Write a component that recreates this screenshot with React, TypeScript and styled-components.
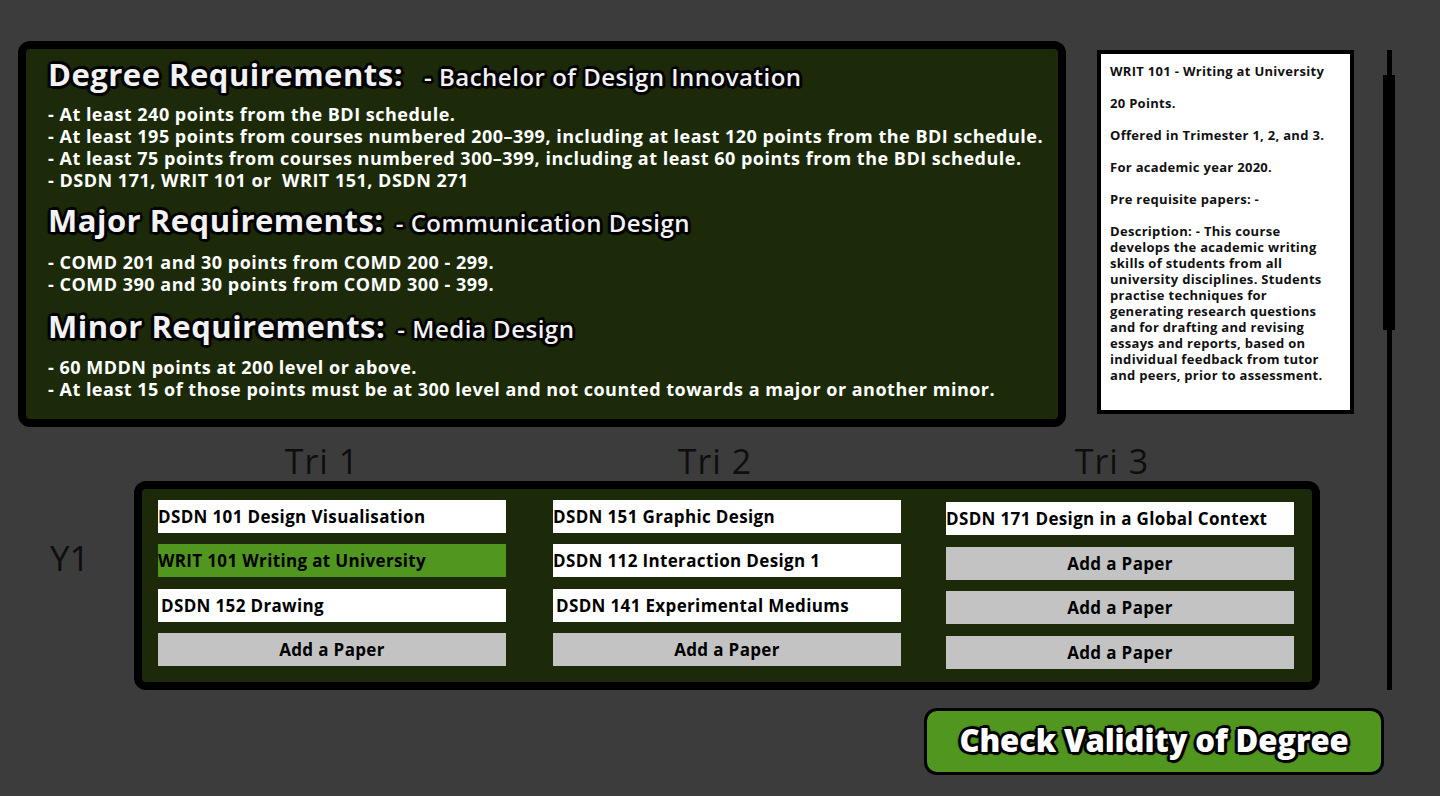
import React from "react";
import styled, { createGlobalStyle } from "styled-components";

const GlobalStyle = createGlobalStyle`
  html, body { margin: 0; padding: 0; background: #3c3c3c; }
  body { font-family: "Open Sans", "Liberation Sans", sans-serif; }
  * { box-sizing: border-box; }
`;

const Page = styled.div`
  width: 1440px;
  height: 796px;
  background: #3c3c3c;
  padding: 41px 0 0 18px;
  display: flex;
  flex-direction: column;
  overflow: hidden;
`;

const Upper = styled.div`
  display: flex;
  align-items: flex-start;
`;

const MainColumn = styled.div`
  width: 1336px;
  display: flex;
  flex-direction: column;
`;

const TopRow = styled.div`
  display: flex;
  align-items: flex-start;
`;

const ReqPanel = styled.section`
  width: 1048px;
  height: 386px;
  background: #1c2a09;
  border: 8px solid #000;
  border-radius: 12px;
  padding: 5px 0 0 22px;
  display: flex;
  flex-direction: column;
`;

const Section = styled.div<{ $gap: number }>`
  margin-top: ${(p) => p.$gap}px;
`;

const outline = `
  text-shadow:
    0 0 2px #000,
    2px 2px 0 #000, -2px -2px 0 #000, 2px -2px 0 #000, -2px 2px 0 #000,
    0 2px 0 #000, 0 -2px 0 #000, 2px 0 0 #000, -2px 0 0 #000,
    3px 1px 1px #000, -3px 1px 1px #000, 1px 3px 1px #000, 1px -3px 1px #000;
`;

const Heading = styled.h2`
  margin: 0;
  height: 40px;
  line-height: 40px;
  white-space: nowrap;
  color: #f2f2f2;
  font-size: 31px;
  font-weight: 700;
  letter-spacing: 0.5px;
  ${outline}
`;

const SubTitle = styled.span<{ $gap: number }>`
  margin-left: ${(p) => p.$gap}px;
  font-size: 24px;
  font-weight: 600;
  letter-spacing: 0.5px;
`;

const Rules = styled.ul<{ $gap: number }>`
  list-style: none;
  margin: ${(p) => p.$gap}px 0 0;
  padding: 0;
`;

const Rule = styled.li`
  color: #fff;
  font-size: 18px;
  font-weight: 700;
  line-height: 22px;
  height: 22px;
  white-space: nowrap;
  letter-spacing: 0.5px;
`;

const InfoCard = styled.aside`
  margin: 9px 0 0 31px;
  width: 257px;
  height: 364px;
  background: #fff;
  border: 4px solid #000;
  padding: 9px 0 0 9px;
`;

const InfoPara = styled.p`
  margin: 0 0 16px;
  color: #111;
  font-size: 13px;
  font-weight: 700;
  line-height: 16px;
  white-space: nowrap;
  letter-spacing: 0.3px;
`;

const Scrollbar = styled.div`
  position: relative;
  margin: 9px 0 0 29px;
  width: 12px;
  height: 640px;
  display: flex;
  justify-content: center;
  &::before {
    content: "";
    width: 5px;
    height: 100%;
    background: #000;
  }
`;

const Thumb = styled.div`
  position: absolute;
  left: 0;
  top: 25px;
  width: 12px;
  height: 255px;
  background: #000;
`;

const TriHeader = styled.div`
  margin-top: 14px;
  height: 40px;
  padding-left: 140px;
  padding-right: 18px;
  display: flex;
  justify-content: space-between;
  width: 1294px;
`;

const TriLabel = styled.div<{ $shift: number }>`
  width: 348px;
  text-align: center;
  padding-right: ${(p) => p.$shift}px;
  font-size: 34px;
  line-height: 40px;
  font-weight: 500;
  color: #0e0e0e;
  letter-spacing: 1px;
`;

const YearRow = styled.div`
  display: flex;
  align-items: flex-start;
`;

const YearLabel = styled.div`
  width: 116px;
  padding-left: 32px;
  margin-top: 57px;
  font-size: 35px;
  line-height: 40px;
  font-weight: 500;
  color: #0e0e0e;
`;

const YearPanel = styled.div`
  width: 1186px;
  height: 209px;
  background: #1c2a09;
  border: 8px solid #000;
  border-radius: 12px;
  padding: 10.5px 18px 0 16px;
  display: flex;
  justify-content: space-between;
`;

const TriColumn = styled.div<{ $offset: number; $nudge: number }>`
  width: 348px;
  padding-top: ${(p) => p.$offset}px;
  margin-left: ${(p) => p.$nudge}px;
  display: flex;
  flex-direction: column;
  gap: 11.5px;
`;

const Paper = styled.div<{ $kind: "course" | "selected" | "add"; $indent: number }>`
  height: 33px;
  display: flex;
  align-items: center;
  justify-content: ${(p) => (p.$kind === "add" ? "center" : "flex-start")};
  padding-left: ${(p) => p.$indent}px;
  background: ${(p) =>
    p.$kind === "add" ? "#c3c3c3" : p.$kind === "selected" ? "#51961f" : "#fff"};
  color: #000;
  font-size: 17px;
  font-weight: 700;
  white-space: nowrap;
  letter-spacing: 0.35px;
`;

const ButtonRow = styled.div`
  display: flex;
  justify-content: flex-end;
  padding-right: 56px;
  margin-top: 18px;
`;

const CheckButton = styled.button`
  width: 460px;
  height: 67px;
  padding: 0 0 3px;
  background: #51961f;
  border: 3px solid #000;
  border-radius: 13px;
  color: #fff;
  font-family: "Open Sans", "Liberation Sans", sans-serif;
  font-size: 31px;
  font-weight: 800;
  letter-spacing: -0.1px;
  cursor: pointer;
  ${outline}
`;

type PaperData = { label: string; kind: "course" | "selected" | "add"; indent?: number };

const columns: {
  title: string;
  shift: number;
  offset: number;
  nudge: number;
  papers: PaperData[];
}[] = [
  {
    title: "Tri 1",
    shift: 20,
    offset: 0,
    nudge: 0,
    papers: [
      { label: "DSDN 101 Design Visualisation", kind: "course" },
      { label: "WRIT 101 Writing at University", kind: "selected" },
      { label: "DSDN 152 Drawing", kind: "course", indent: 3 },
      { label: "Add a Paper", kind: "add" },
    ],
  },
  {
    title: "Tri 2",
    shift: 22,
    offset: 0,
    nudge: 2,
    papers: [
      { label: "DSDN 151 Graphic Design", kind: "course" },
      { label: "DSDN 112 Interaction Design 1", kind: "course" },
      { label: "DSDN 141 Experimental Mediums", kind: "course", indent: 3 },
      { label: "Add a Paper", kind: "add" },
    ],
  },
  {
    title: "Tri 3",
    shift: 16,
    offset: 2.5,
    nudge: 0,
    papers: [
      { label: "DSDN 171 Design in a Global Context", kind: "course" },
      { label: "Add a Paper", kind: "add" },
      { label: "Add a Paper", kind: "add" },
      { label: "Add a Paper", kind: "add" },
    ],
  },
];

export default function App() {
  return (
    <>
      <GlobalStyle />
      <Page>
        <Upper>
          <MainColumn>
            <TopRow>
              <ReqPanel>
                <Heading>
                  Degree Requirements:<SubTitle $gap={21}>- Bachelor of Design Innovation</SubTitle>
                </Heading>
                <Rules $gap={9}>
                  <Rule>- At least 240 points from the BDI schedule.</Rule>
                  <Rule>
                    - At least 195 points from courses numbered 200–399, including at least 120 points from the BDI schedule.
                  </Rule>
                  <Rule>
                    - At least 75 points from courses numbered 300–399, including at least 60 points from the BDI schedule.
                  </Rule>
                  <Rule>- DSDN 171, WRIT 101 or&nbsp; WRIT 151, DSDN 271</Rule>
                </Rules>
                <Section $gap={9}>
                  <Heading>
                    Major Requirements:<SubTitle $gap={12}>- Communication Design</SubTitle>
                  </Heading>
                  <Rules $gap={11}>
                    <Rule>- COMD 201 and 30 points from COMD 200 - 299.</Rule>
                    <Rule>- COMD 390 and 30 points from COMD 300 - 399.</Rule>
                  </Rules>
                </Section>
                <Section $gap={11}>
                  <Heading>
                    Minor Requirements:<SubTitle $gap={12}>- Media Design</SubTitle>
                  </Heading>
                  <Rules $gap={10}>
                    <Rule>- 60 MDDN points at 200 level or above.</Rule>
                    <Rule>
                      - At least 15 of those points must be at 300 level and not counted towards a major or another minor.
                    </Rule>
                  </Rules>
                </Section>
              </ReqPanel>
              <InfoCard>
                <InfoPara>WRIT 101 - Writing at University</InfoPara>
                <InfoPara>20 Points.</InfoPara>
                <InfoPara>Offered in Trimester 1, 2, and 3.</InfoPara>
                <InfoPara>For academic year 2020.</InfoPara>
                <InfoPara>Pre requisite papers: -</InfoPara>
                <InfoPara>
                  Description: - This course
                  <br />
                  develops the academic writing
                  <br />
                  skills of students from all
                  <br />
                  university disciplines. Students
                  <br />
                  practise techniques for
                  <br />
                  generating research questions
                  <br />
                  and for drafting and revising
                  <br />
                  essays and reports, based on
                  <br />
                  individual feedback from tutor
                  <br />
                  and peers, prior to assessment.
                </InfoPara>
              </InfoCard>
            </TopRow>
            <TriHeader>
              {columns.map((c) => (
                <TriLabel key={c.title} $shift={c.shift}>
                  {c.title}
                </TriLabel>
              ))}
            </TriHeader>
            <YearRow>
              <YearLabel>Y1</YearLabel>
              <YearPanel>
                {columns.map((c) => (
                  <TriColumn key={c.title} $offset={c.offset} $nudge={c.nudge}>
                    {c.papers.map((p, i) => (
                      <Paper key={i} $kind={p.kind} $indent={p.indent ?? 0}>
                        {p.label}
                      </Paper>
                    ))}
                  </TriColumn>
                ))}
              </YearPanel>
            </YearRow>
          </MainColumn>
          <Scrollbar>
            <Thumb />
          </Scrollbar>
        </Upper>
        <ButtonRow>
          <CheckButton>Check Validity of Degree</CheckButton>
        </ButtonRow>
      </Page>
    </>
  );
}
